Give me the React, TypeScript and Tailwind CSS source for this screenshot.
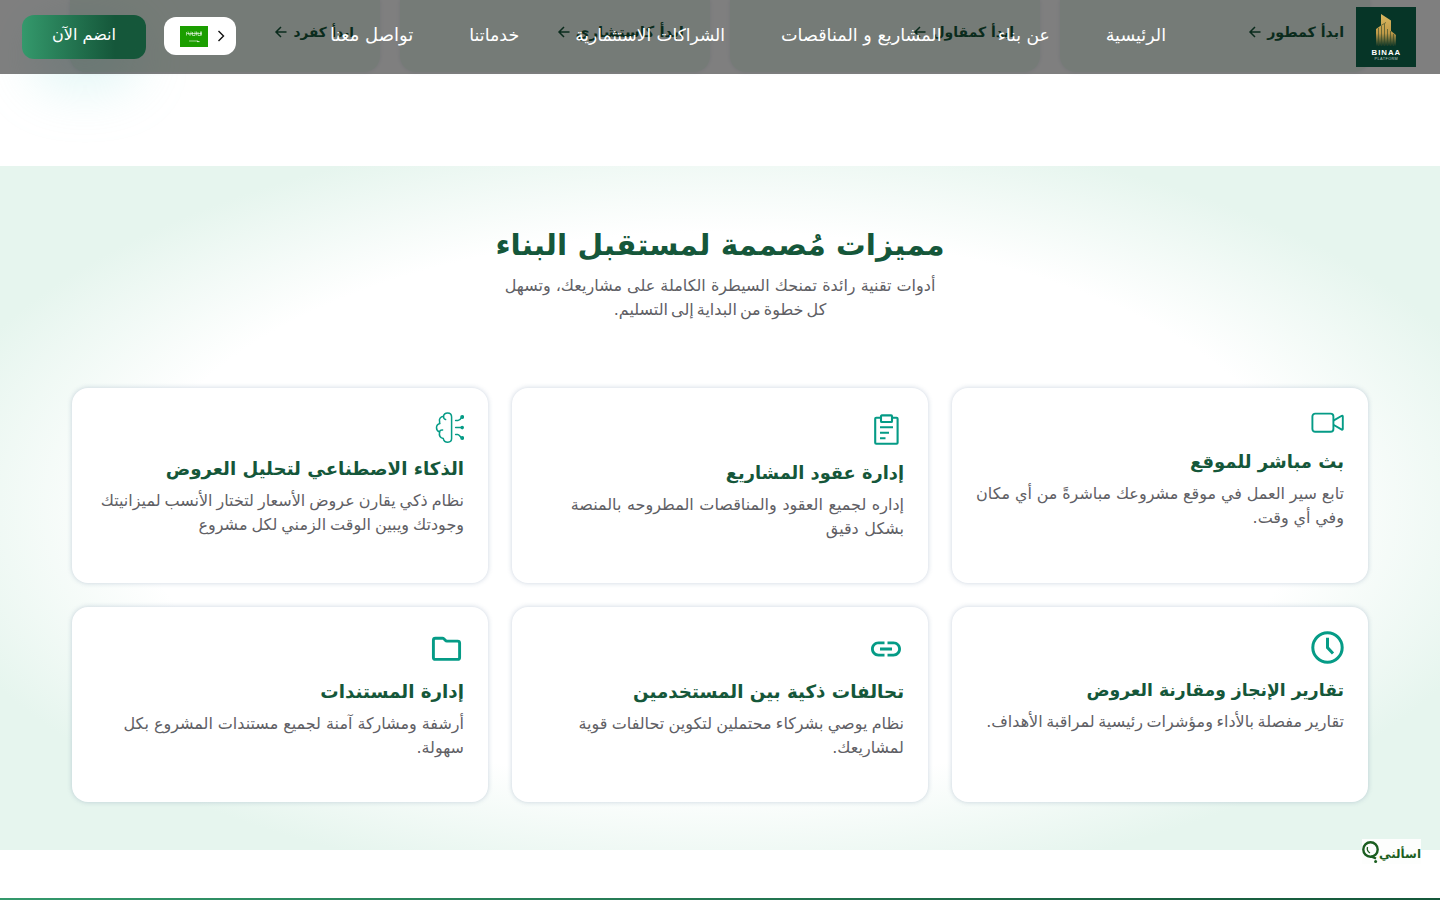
import type { ReactNode } from 'react';
import { MdLink } from 'react-icons/md';

const navLinks = [
  { label: 'الرئيسية', size: 'text-[17.5px]' },
  { label: 'عن بناء', size: 'text-[17.2px]' },
  { label: 'المشاريع و المناقصات', size: 'text-[17.6px]' },
  { label: 'الشراكات الاستثمارية', size: 'text-[17px]' },
  { label: 'خدماتنا', size: 'text-[17.4px]' },
  { label: 'تواصل معنا', size: 'text-[18px]' }
];

const roles = [
  { label: 'ابدأ كمطور', size: 'text-[14.2px]' },
  { label: 'ابدأ كمقاول', size: 'text-sm' },
  { label: 'ابدأ كاستشاري', size: 'text-[15px]' },
  { label: 'ابدأ كفرد', size: 'text-[13.7px]' }
];

function CameraIcon() {
  return (
    <svg width="33" height="25" viewBox="0 0 33 25" fill="none" stroke="#059b86" strokeWidth="1.9" strokeLinejoin="round">
      <rect x="1.4" y="1.6" width="21" height="18.2" rx="2.8" />
      <path d="M22.4 8.6L30.8 3.8Q31.8 3.4 31.8 4.6V16.8Q31.8 18 30.8 17.6L22.4 12.8" />
    </svg>
  );
}

function ClipboardIcon() {
  return (
    <svg width="36" height="36" viewBox="0 0 36 36" fill="none" stroke="#059b86" strokeWidth="2.1">
      <path d="M12.5 5.8H8.2Q7.2 5.8 7.2 6.8V30.8Q7.2 31.8 8.2 31.8H28.6Q29.6 31.8 29.6 30.8V6.8Q29.6 5.8 28.6 5.8H24.5" />
      <rect x="13" y="3.4" width="11" height="6.6" rx="0.8" />
      <path d="M12 15.3H25M12 20.8H21M12 26.2H17.5" />
    </svg>
  );
}

function BrainIcon() {
  return (
    <svg width="32" height="32" viewBox="0 0 32 32" fill="none" stroke="#059b86" strokeWidth="1.5" strokeLinecap="round" strokeLinejoin="round">
      <path d="M19.6 5C19.6 2.2 17.8 .9 15.6 .9C13.3 .9 11.8 2.2 11.5 4.3C8.4 4.6 6.8 7 7.6 9.7C7.4 10.6 7.6 11 7.9 11.6C5.6 12.2 4.5 13.8 4.5 15.8C4.5 17.9 5.7 19.4 7.6 20C6.9 23.2 8 25.8 11.3 26.6C11.7 29 13.4 30.2 15.8 30.2C18.1 30.2 19.6 29 19.6 26.6Z" />
      <path d="M11.5 4.5C11.6 6.5 12.6 7.4 13.6 7.6M7.6 20C7.6 18.5 8.8 17.8 10.6 18" />
      <path d="M23.6 8.4H26C27.5 8.4 28.5 7.4 29.5 5.6M23.6 15.6H30M23.6 22.4H25.6C27.3 22.4 28 25 29.5 25.6" />
      <g fill="#059b86" stroke="none">
        <circle cx="30.2" cy="5" r="2" />
        <circle cx="30.2" cy="15.6" r="1.8" />
        <circle cx="30.2" cy="26" r="2" />
      </g>
    </svg>
  );
}

function ClockIcon() {
  return (
    <svg width="33" height="34" viewBox="0 0 33 34" fill="none" stroke="#059b86" strokeWidth="3">
      <circle cx="16.5" cy="16.5" r="14.7" />
      <path d="M16.5 6.8V16.6L22 22.6" />
    </svg>
  );
}

function FolderIcon() {
  return (
    <svg width="36" height="36" viewBox="0 0 36 36" fill="none" stroke="#059b86" strokeWidth="2.9" strokeLinejoin="round">
      <path d="M7.4 7.2H14.4Q15.2 7.2 15.8 7.8L17.3 9.3Q18 10.1 18.9 10.1H29.6Q31.6 10.1 31.6 12.1V26.4Q31.6 28.4 29.6 28.4H7.4Q5.4 28.4 5.4 26.4V9.2Q5.4 7.2 7.4 7.2Z" />
    </svg>
  );
}

interface Feature {
  icon: ReactNode;
  title: string;
  titleSize: string;
  lines: string[];
  spacing: string;
}

const features: Feature[] = [
  {
    icon: <CameraIcon />,
    title: 'بث مباشر للموقع',
    titleSize: 'text-lg',
    lines: ['تابع سير العمل في موقع مشروعك مباشرةً من أي مكان', 'وفي أي وقت.'],
    spacing: '[word-spacing:-0.3px]'
  },
  {
    icon: <ClipboardIcon />,
    title: 'إدارة عقود المشاريع',
    titleSize: 'text-[17.8px]',
    lines: ['إداره لجميع العقود والمناقصات المطروحه بالمنصة', 'بشكل دقيق'],
    spacing: '[word-spacing:0.5px]'
  },
  {
    icon: <BrainIcon />,
    title: 'الذكاء الاصطناعي لتحليل العروض',
    titleSize: 'text-[18.2px]',
    lines: ['نظام ذكي يقارن عروض الأسعار لتختار الأنسب لميزانيتك', 'وجودتك ويبين الوقت الزمني لكل مشروع'],
    spacing: '[word-spacing:-1.1px]'
  },
  {
    icon: <ClockIcon />,
    title: 'تقارير الإنجاز ومقارنة العروض',
    titleSize: 'text-[17.2px]',
    lines: ['تقارير مفصلة بالأداء ومؤشرات رئيسية لمراقبة الأهداف.'],
    spacing: '[word-spacing:-1.5px]'
  },
  {
    icon: <MdLink size={36} color="#059b86" />,
    title: 'تحالفات ذكية بين المستخدمين',
    titleSize: 'text-[18.3px]',
    lines: ['نظام يوصي بشركاء محتملين لتكوين تحالفات قوية', 'لمشاريعك.'],
    spacing: '[word-spacing:-0.8px]'
  },
  {
    icon: <FolderIcon />,
    title: 'إدارة المستندات',
    titleSize: 'text-[18.3px]',
    lines: ['أرشفة ومشاركة آمنة لجميع مستندات المشروع بكل', 'سهولة.'],
    spacing: '[word-spacing:-0.1px]'
  }
];

function Logo() {
  return (
    <svg width="60" height="60" viewBox="0 0 60 60" className="shrink-0">
      <defs>
        <linearGradient id="gold" x1="0" y1="0" x2="0" y2="1">
          <stop offset="0" stopColor="#d9b860" />
          <stop offset="0.6" stopColor="#c09a48" />
          <stop offset="1" stopColor="#0a3528" />
        </linearGradient>
      </defs>
      <rect width="60" height="60" fill="#063527" />
      <path d="M25 7L35 13.5V24L40 28V39H20V22L25 18.5Z" fill="url(#gold)" />
      <path d="M22.5 21V39M25.5 19V39M28.5 17V39M31.5 22V39M34.5 24V39M37.5 27V39M25 18.5L30 15.5" stroke="#2d4427" strokeWidth="0.6" />
      <text x="30.4" y="48.3" textAnchor="middle" fontSize="7.8" fontWeight="700" letterSpacing="1" fill="#fff" fontFamily="Liberation Sans, sans-serif">BINAA</text>
      <text x="30.4" y="53.2" textAnchor="middle" fontSize="3.8" letterSpacing="0.4" fill="#b8c6c0" fontFamily="Liberation Sans, sans-serif">PLATFORM</text>
    </svg>
  );
}

function Header() {
  return (
    <header className="absolute inset-x-0 top-0 z-10 flex h-[74px] items-center bg-black/50 pr-6 pl-[22px]">
      <Logo />
      <nav className="mr-[190px] flex items-center gap-14 pb-[5px] text-white">
        {navLinks.map(({ label, size }) => (
          <a key={label} href="#" className={`${size} leading-6 whitespace-nowrap`}>{label}</a>
        ))}
      </nav>
      <div className="mr-auto flex items-center gap-[18px]">
        <button className="mb-0.5 flex h-[38px] w-[72px] items-center justify-start gap-[7px] rounded-xl bg-white pr-[9px]">
          <svg width="12" height="12" viewBox="0 0 12 12" fill="none" stroke="#111" strokeWidth="1.4">
            <path d="M3.5 1L8.5 6L3.5 11" />
          </svg>
          <svg width="28" height="21" viewBox="0 0 28 21">
            <rect width="28" height="21" fill="#1b9e00" />
            <path d="M6.5 6V9.5M8 5.5L9 9H11V5.5M12.5 6V9.5H15V5.5M16.5 9.5V5.5M18 6V9.5H20.5V5.5M7 7.5H21.5M21.5 5.5V9.5M9 15H18" fill="none" stroke="#fff" strokeOpacity="0.65" strokeWidth="0.9" />
            <path d="M17 15.6H19.5" stroke="#fff" strokeWidth="0.8" />
          </svg>
        </button>
        <button className="h-11 w-[124px] rounded-xl bg-linear-to-r from-[#34996c] to-[#15573a] to-75% pb-1 text-base text-white">
          انضم الآن
        </button>
      </div>
    </header>
  );
}

function RoleCards() {
  return (
    <div className="flex h-[166px] items-start gap-5 bg-white px-[70px]">
      {roles.map(({ label, size }) => (
        <div key={label} className="flex h-[72px] flex-1 basis-0 items-center gap-[5px] rounded-b-2xl bg-[#ebf7ee] pr-[26px] pb-2 font-bold text-[#15573a] shadow-[0_0_4px_rgba(80,110,150,0.15)]">
          <span className={`${size} leading-5 whitespace-nowrap`}>{label}</span>
          <svg width="14" height="14" viewBox="0 0 14 14" fill="none" stroke="#15573a" strokeWidth="1.5">
            <path d="M12.5 7H2M7 2L2 7L7 12" />
          </svg>
        </div>
      ))}
    </div>
  );
}

function FeatureCard({ icon, title, titleSize, lines, spacing }: Feature) {
  return (
    <div className="h-[195px] rounded-2xl bg-white p-6 shadow-[0_0_5px_rgba(80,110,150,0.3)]">
      <div className="mb-2.5 flex">{icon}</div>
      <h3 className={`${titleSize} leading-[30px] font-bold whitespace-nowrap text-[#15573a]`}>{title}</h3>
      <div className={`${spacing} mt-[5px] text-base leading-6 text-[#5f6065]`}>
        {lines.map((line) => (
          <p key={line} className="whitespace-nowrap">{line}</p>
        ))}
      </div>
    </div>
  );
}

export default function App() {
  return (
    <div dir="rtl" className="relative h-[900px] w-[1440px] overflow-hidden bg-white font-['DejaVu_Sans',sans-serif]">
      <Header />
      <RoleCards />
      <div className="absolute top-[20px] left-[30px] h-[70px] w-[110px] rounded-full bg-[#8ee0dc]/25 blur-[25px]" />

      <section className="h-[684px] bg-[radial-gradient(ellipse_farthest-corner_at_center,#ffffff_57%,#e6f5ee_80%)] px-[72px] pt-[57px]">
        <div className="mb-[66px] flex flex-col items-center">
          <h2 className="mb-1.5 text-[29.6px] leading-[45px] font-bold whitespace-nowrap text-[#15573a]">مميزات مُصممة لمستقبل البناء</h2>
          <div className="text-center text-base leading-6 text-[#5f6065]">
            <p className="whitespace-nowrap">أدوات تقنية رائدة تمنحك السيطرة الكاملة على مشاريعك، وتسهل</p>
            <p className="[word-spacing:-2px]">كل خطوة من البداية إلى التسليم.</p>
          </div>
        </div>
        <div className="grid grid-cols-3 gap-6">
          {features.map((feature) => (
            <FeatureCard key={feature.title} {...feature} />
          ))}
        </div>
      </section>

      <div className="h-12 bg-white" />
      <footer className="h-0.5 bg-linear-to-r from-[#34996c] to-[#15573a]" />

      {/* Floating assistant button */}
      <button className="absolute top-[839px] left-[1362px] flex h-[25px] w-[59px] items-center justify-between bg-[#fdfefd]">
        <span className="pt-1 text-xs font-bold whitespace-nowrap text-[#1b5e20]">اسألني</span>
        <svg width="18" height="24" viewBox="0 0 18 24" fill="none" stroke="#1b5e20" strokeWidth="2.4" className="shrink-0">
          <circle cx="9.5" cy="9.5" r="7.2" />
          <path d="M6.5 7Q5.5 11 9 13" strokeWidth="1.3" />
          <path d="M10 16.5L15 18.5" />
          <circle cx="14.6" cy="21.6" r="1.5" fill="#1b5e20" stroke="none" />
        </svg>
      </button>
    </div>
  );
}
